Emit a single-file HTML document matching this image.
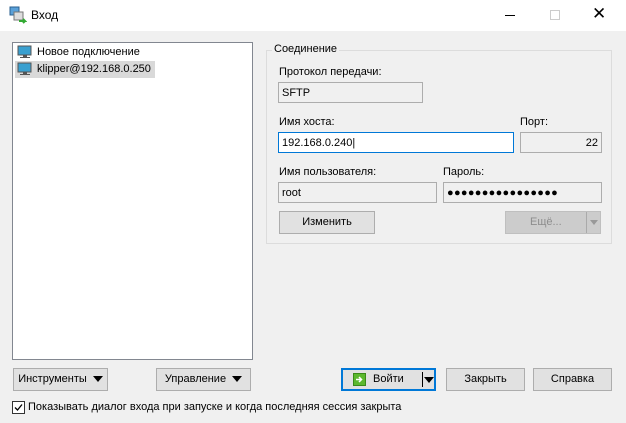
<!DOCTYPE html><html><head><style>
*{box-sizing:border-box}body{margin:0;width:626px;height:423px;background:#f0f0f0;font-family:"Liberation Sans",sans-serif;font-size:11px;color:#000;position:relative;overflow:hidden}
.a{position:absolute}
.tb{left:0;top:0;width:626px;height:31px;background:#fff}
.inp{position:absolute;background:#fff;border:1px solid #7a7a7a;height:21px;padding:3px 3px;font-size:11px;line-height:14px}
.ro{background:#f0f0f0;border-color:#adadad}
.btn{position:absolute;background:#e1e1e1;border:1px solid #adadad;height:23px;text-align:center;line-height:21px;font-size:11px}
.tri{display:inline-block;width:0;height:0;border-left:5px solid transparent;border-right:5px solid transparent;border-top:6px solid #000;vertical-align:middle;margin-left:6px}
</style></head><body>
<div class="a tb"></div>
<svg class="a" style="left:9px;top:6px" width="18" height="18"><rect x="1" y="1" width="9" height="8" fill="#5aa0d8" stroke="#2a5f8f"/><rect x="5" y="6" width="9" height="8" fill="#ddd" stroke="#777"/><path d="M10 15 l6 0 l-2 -2 M16 15 l-2 2" stroke="#3a3" stroke-width="2" fill="none"/></svg>
<div class="a" style="left:31px;top:8px;font-size:12px">Вход</div>
<div class="a" style="left:505px;top:15px;width:10px;height:1px;background:#000"></div>
<div class="a" style="left:550px;top:10px;width:10px;height:10px;border:1px solid #ccc"></div>
<div class="a" style="left:592px;top:5px;font-size:17px;line-height:18px">✕</div>
<div class="a" style="left:12px;top:42px;width:241px;height:318px;background:#fff;border:1px solid #828790"></div>
<svg class="a" style="left:17px;top:45px" width="16" height="14"><rect x="1" y="1" width="13" height="9" fill="#3aa0d0" stroke="#555"/><rect x="6" y="10" width="4" height="2" fill="#555"/><rect x="3" y="12" width="10" height="1" fill="#555"/></svg>
<div class="a" style="left:37px;top:46px">Новое подключение</div>
<div class="a" style="left:15px;top:61px;width:140px;height:17px;background:#d9d9d9"></div>
<svg class="a" style="left:17px;top:62px" width="16" height="14"><rect x="1" y="1" width="13" height="9" fill="#3aa0d0" stroke="#555"/><rect x="6" y="10" width="4" height="2" fill="#555"/><rect x="3" y="12" width="10" height="1" fill="#555"/></svg>
<div class="a" style="left:37px;top:63px">klipper@192.168.0.250</div>
<div class="a" style="left:266px;top:50px;width:346px;height:194px;border:1px solid #dcdcdc"></div>
<div class="a" style="left:272px;top:43px;background:#f0f0f0;padding:0 2px">Соединение</div>
<div class="a" style="left:279px;top:66px">Протокол передачи:</div>
<div class="inp ro" style="left:278px;top:82px;width:145px">SFTP</div>
<div class="a" style="left:279px;top:116px">Имя хоста:</div>
<div class="inp" style="left:278px;top:132px;width:236px;border-color:#0078d7">192.168.0.240|</div>
<div class="a" style="left:520px;top:116px">Порт:</div>
<div class="inp ro" style="left:520px;top:132px;width:82px;text-align:right">22</div>
<div class="a" style="left:279px;top:166px">Имя пользователя:</div>
<div class="inp ro" style="left:278px;top:182px;width:159px">root</div>
<div class="a" style="left:443px;top:166px">Пароль:</div>
<div class="inp ro" style="left:443px;top:182px;width:159px;font-size:11px;letter-spacing:0.3px">●●●●●●●●●●●●●●●●</div>
<div class="btn" style="left:279px;top:211px;width:96px">Изменить</div>
<div class="btn" style="left:505px;top:211px;width:96px;background:#ccc;border-color:#bfbfbf;color:#8d8d8d;text-align:left;padding-left:24px">Ещё...<span class="a" style="left:80px;top:0;width:1px;height:21px;background:#aaa"></span><span class="a" style="left:84px;top:8px;border-left:4px solid transparent;border-right:4px solid transparent;border-top:5px solid #999"></span></div>
<div class="btn" style="left:13px;top:368px;width:95px">Инструменты<span class="tri"></span></div>
<div class="btn" style="left:156px;top:368px;width:95px">Управление<span class="tri"></span></div>
<div class="btn" style="left:341px;top:368px;width:95px;border:2px solid #0078d7;line-height:19px;text-align:left;padding-left:30px">Войти<span class="a" style="left:79px;top:2px;width:1px;height:15px;background:#000"></span><span class="a" style="left:81px;top:7px;border-left:5px solid transparent;border-right:5px solid transparent;border-top:6px solid #000"></span></div>
<svg class="a" style="left:353px;top:373px" width="13" height="13"><rect x="0.5" y="0.5" width="12" height="12" fill="#5cb82e" stroke="#3a8a1a"/><path d="M3 6.5h5M6 4l2.5 2.5L6 9" stroke="#fff" stroke-width="1.5" fill="none"/></svg>
<div class="btn" style="left:446px;top:368px;width:79px">Закрыть</div>
<div class="btn" style="left:533px;top:368px;width:79px">Справка</div>
<div class="a" style="left:12px;top:401px;width:13px;height:13px;background:#fff;border:1px solid #333"></div>
<svg class="a" style="left:13px;top:402px" width="11" height="11"><path d="M2 5.5l2.5 2.5L9 2.5" stroke="#000" stroke-width="1.3" fill="none"/></svg>
<div class="a" style="left:28px;top:401px">Показывать диалог входа при запуске и когда последняя сессия закрыта</div>
</body></html>
